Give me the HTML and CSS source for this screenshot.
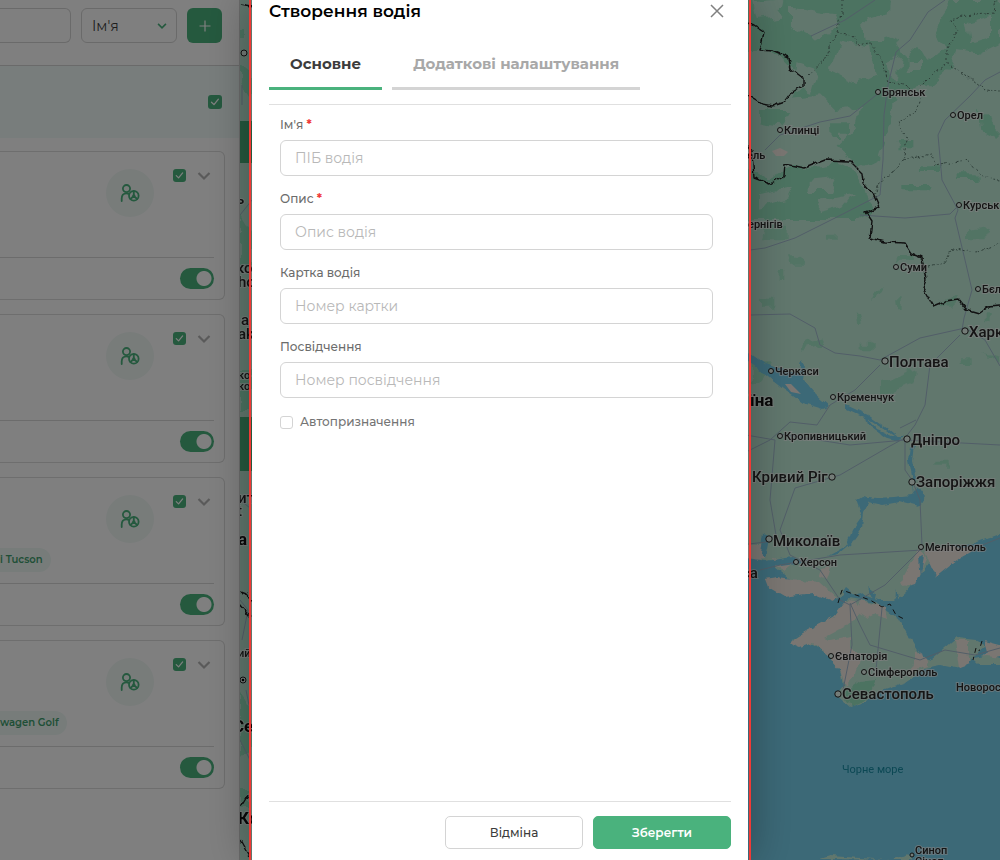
FILE: index.html
```html
<!DOCTYPE html>
<html lang="uk">
<head>
<meta charset="utf-8">
<meta name="viewport" content="width=device-width, initial-scale=1">
<title>Створення водія</title>
<link rel="stylesheet" href="styles.css">
</head>
<body>
<svg class="sprite" aria-hidden="true">
  <symbol id="check" viewBox="0 0 14 14"><path d="M3.5 7.2 6 9.6l4.4-5.4" fill="none" stroke="#fff" stroke-width="1.3" stroke-linecap="round" stroke-linejoin="round"/></symbol>
  <symbol id="chevron" viewBox="0 0 14 10"><path d="M1.5 2 7 7.5 12.500 2" fill="none" stroke="currentColor" stroke-width="2.200"/></symbol>
  <symbol id="driver" viewBox="0 0 20 18"><g fill="none" stroke="currentColor" stroke-width="1.800" stroke-linecap="round"><circle cx="6.500" cy="4.600" r="3.600"/><path d="M1.700 17v-2.500c0-3.300 2-5.200 4.800-5.200 1 0 1.700.2 2.300.6"/><circle cx="13.800" cy="11.800" r="4.800"/><path d="M13.800 7.200v3.600M13.800 12l-3.400 3M13.800 12l3.400 3"/></g><circle cx="13.800" cy="11.800" r="1.600" fill="currentColor"/></symbol>
</svg>

<div class="app">
  <aside class="sidebar">
    <div class="toolbar">
      <input class="search" type="text" aria-label="Пошук">
      <div class="sort">
        <select class="sort-select" aria-label="Сортування"><option>Ім'я</option></select>
        <svg class="sort-arrow" aria-hidden="true"><use href="#chevron"/></svg>
      </div>
      <button class="add" aria-label="Додати"><svg viewBox="0 0 12 12" aria-hidden="true"><path d="M6 .5v11M.5 6h11" stroke="#fff" stroke-width="1.200"/></svg></button>
    </div>
    <div class="band">
      <label class="tick"><input type="checkbox" checked aria-label="Обрати всіх"><svg aria-hidden="true"><use href="#check"/></svg></label>
    </div>
    <div class="cards">
      <article class="card">
        <div class="card-top">
          <span class="avatar"><svg aria-hidden="true"><use href="#driver"/></svg></span>
          <label class="tick small"><input type="checkbox" checked aria-label="Обрати водія"><svg aria-hidden="true"><use href="#check"/></svg></label>
          <button class="expand" aria-label="Розгорнути"><svg aria-hidden="true"><use href="#chevron"/></svg></button>
        </div>
        <div class="card-foot"><input class="switch" type="checkbox" checked aria-label="Активний"></div>
      </article>
      <article class="card">
        <div class="card-top">
          <span class="avatar"><svg aria-hidden="true"><use href="#driver"/></svg></span>
          <label class="tick small"><input type="checkbox" checked aria-label="Обрати водія"><svg aria-hidden="true"><use href="#check"/></svg></label>
          <button class="expand" aria-label="Розгорнути"><svg aria-hidden="true"><use href="#chevron"/></svg></button>
        </div>
        <div class="card-foot"><input class="switch" type="checkbox" checked aria-label="Активний"></div>
      </article>
      <article class="card">
        <div class="card-top">
          <span class="tag">i Tucson</span>
          <span class="avatar"><svg aria-hidden="true"><use href="#driver"/></svg></span>
          <label class="tick small"><input type="checkbox" checked aria-label="Обрати водія"><svg aria-hidden="true"><use href="#check"/></svg></label>
          <button class="expand" aria-label="Розгорнути"><svg aria-hidden="true"><use href="#chevron"/></svg></button>
        </div>
        <div class="card-foot"><input class="switch" type="checkbox" checked aria-label="Активний"></div>
      </article>
      <article class="card">
        <div class="card-top">
          <span class="tag">wagen Golf</span>
          <span class="avatar"><svg aria-hidden="true"><use href="#driver"/></svg></span>
          <label class="tick small"><input type="checkbox" checked aria-label="Обрати водія"><svg aria-hidden="true"><use href="#check"/></svg></label>
          <button class="expand" aria-label="Розгорнути"><svg aria-hidden="true"><use href="#chevron"/></svg></button>
        </div>
        <div class="card-foot"><input class="switch" type="checkbox" checked aria-label="Активний"></div>
      </article>
    </div>
  </aside>

  <main class="map">
    <svg class="map-svg" viewBox="240 0 760 860" preserveAspectRatio="xMinYMin slice" role="img" aria-label="Мапа">
      <defs>
        <filter id="rough" x="-5%" y="-5%" width="110%" height="110%"><feTurbulence type="fractalNoise" baseFrequency="0.12" numOctaves="2" seed="4"/><feDisplacementMap in="SourceGraphic" scale="6" xChannelSelector="R" yChannelSelector="G"/></filter>
        <filter id="blobs" x="-5%" y="-5%" width="110%" height="110%"><feTurbulence type="fractalNoise" baseFrequency="0.07" numOctaves="2" seed="9"/><feDisplacementMap in="SourceGraphic" scale="14" xChannelSelector="R" yChannelSelector="G"/></filter>
      </defs>
      <rect class="land" x="240" width="1200" height="1000"/>

      <g filter="url(#blobs)">
        <g class="forest" transform="scale(.33333) translate(2220 0)">
          <path d="M0-20H450L440 40 400 90 470 120 500 180 560 130 600 60 640 0H780V130L720 160 650 150 630 200 560 260 470 280 450 370 420 470 360 500 290 440 350 380 360 320 290 330 240 280 160 290 180 230 100 150 0 150Z"/>
          <path d="M0 480 80 540 150 500 220 500 300 490 340 510 370 560 400 640 360 660H0Z"/>
          <path d="M60 330 160 330 120 380 60 370Z"/><path d="M480 420h40v25h-45zM540 490h60v20h-60zM490 555h90v22h-90zM650 520h60v20h-60zM720 330l50 40v50l-40-20z"/>
          <path d="M270 370h60v25h-30v25h-28z"/>
        </g>
        <g class="land" transform="scale(.33333) translate(2220 0)">
          <path d="M40 10 130 0 120 50 50 60Z"/><path d="M150 20 280 40 290 80 220 120 150 80Z"/><path d="M370 60 430 50 430 120 380 120Z"/><path d="M530 40 600 20 580 90 610 140 560 180 520 110Z"/><path d="M440 190 480 170 470 240 450 230Z"/><path d="M500 180h40v30h-40z"/><path d="M170 190l60 20-20 70-50-20z"/><path d="M60 580 160 560 140 600 60 620Z"/><path d="M200 540 290 530 270 570 200 570Z"/><path d="M240 600 340 580 310 620 230 640Z"/><path d="M680 70l70-20v60l-60 20z"/><path d="M300 120l90 20 20 80-60 30-80-40z"/>
        </g>
        <g class="forest soft" transform="scale(.33333) translate(2220 630)">
          <path d="M70 50h70v35h-80zM150 130h20l30 40h-40zM113 180h20v30h-20zM255 65h35v18h-35zM410 235h18l-22 35h-12zM465 262h20v30h-15zM350 305h16l8 40h-14zM365 395h30v20h-30zM195 400l50-12-10 20-45 15zM420 520l110-40-10 40-60 20-40 20zM470 135h50v20h-50zM60 260h40v30h-40zM600 280l50-30v40h-30zM665 445h30v20h-30zM740 310h15v30h-15zM36 460l60 0-50 60h-10zM580 755h40v15h-40zM690 60l60-10-20 35h-40zM730 430l50 10v30z"/>
        </g>
        <path class="forest" d="M240 30h5v8h-5zM240 62l12 10v30l-12-20zM240 215l12 20v30h-12zM240 370h12v40h-12zM240 690l12 20v40l-12 5zM240 790h8v20h-8z"/>
      </g>

      <!-- sea and coast -->
      <g filter="url(#rough)">
        <path class="sea" d="M740 548 752 556 775 567 790 579 818 583 838 600 846 588 856 596 864 594 878 600 897 600 906 592 918 577 930 562 948 545 975 543 1000 534H1500V900H740Z"/>
        <path class="sand" d="M765 579 778 577 800 580 820 582 838 598 832 601 812 593 785 597 768 587ZM742 545 762 545 765 559 745 561ZM772 558l22 4-10 8-10-4zM822 569l8-2-4 12-6-2zM900 583l20-36 7 12-12 25-10 3zM925 552l24-6 30 1-18 10-25 20z"/>
        <path class="land" d="M792 640C806 630 826 622 834 616L848 598 876 602 889 612 898 618 907 634 912 642 921 657 931 660 958 637 976 639 986 645 973 657 966 665 955 668 940 665 925 668 905 682 882 690 866 702 850 707 836 695 843 686 840 670 828 656 812 644 800 646Z"/>
        <path class="sand" d="M790 643C803 630 826 622 834 616L846 600 856 601 860 614 846 626 824 638 830 640 850 636 850 648 861 654 856 674 845 686 840 670 828 656 812 643 800 647ZM860 600l26 6 2 14-12-6-8 4-12-8zM914 650l12 8 2 8-12 4-8 6 6-12zM955 640h14v24l-10 4zM985 641l15 4v12l-20 4 8-10z"/>
        <path class="forest" d="M842 694l18-13 16-2-8 20-16 8z"/>
        <path class="land" d="M965 652l8 6 14-2 13 2v6h-22zM820 859l10-3 60 4 18-6 6 6z"/>
        <path class="water" d="M896 589l5 22-6-3zM918 558l2 20 4-22zM868 588l8 6-2 8zM738 345l14 9 14 10 22 8 11 0 2-12 4 6-2 14 12 14 14 12-6 3-20-6-20-14-30-24-16-8zM846 405l22 10 20 14 16 13-12-8-20-13-26-12zM856 500l6-4 14 2 18-1 18-2 6-8 7 10-6 10-20-5-16 3-14-3-5 10-2 16-10 14-14 12-10 2 18-10 6-16 10-14zM910 444l4 0-2 16 3 14-2 20-2-18-3-16 2-14zM763 532l6 6-4 20-5-4zM866 417l12 13 14 6 12 0-6 5-14-4-16-12zM740 557l25 4 28-4 10 6-30 4-30-2z"/>
      </g>
      <path class="sand" d="M772 151l8-3 8 4-4 4h-8zM785 384l6 0 10 10-10-2z"/>

      <g class="road">
        <path d="M811 36 845 20 875 0M945 0 928 12 910 40 896 52 888 85 884 115 883 160 880 195 835 218 795 238 765 248 750 250M765 150 780 135 820 122 850 116 880 92M1000 72 985 80 970 96 945 120 938 135 942 180 958 210 955 218 965 260 972 290 964 318 962 330M860 215 905 218 950 214 958 206M750 315 790 314 815 328 820 345 835 353 860 356 880 360 920 338 965 328 985 340 1000 366M880 365 855 390 830 405 817 425 790 422 770 440 740 455M960 335 930 365 925 405 915 425 905 438 905 470 912 480 920 500 922 545 922 550 840 555 780 565 760 570M905 438 890 446 840 475 795 488 780 530 790 555 820 570 840 600 850 605 885 585 922 548M746 435 775 440 770 500 776 535 766 542 740 545M780 434 850 445 905 440 1000 445M900 428 916 420M970 550 1000 538M850 603 860 625 870 645 920 660 945 650 975 655 1000 648M882 608 876 670M850 605 852 645 843 690"/>
        <path d="M240 150 246 160M240 215 252 200M242 85v20M240 500l10 8M240 600l8 10-6 30M246 690l4 20M240 740l10 20"/>
      </g>
      <path class="dotted" d="M842 0 842 15 836 33 824 60 808 75 M836 33 852 36 858 45 870 43 882 60 888 82 908 86 920 98 916 112 898 122 907 140 903 160 893 172 880 183 874 195M903 160 932 154 935 166 965 160 985 178 1000 180M920 87 935 72 948 64 965 75 985 90 1000 91M948 64 948 48 958 30 950 20 975 14 994 12 996 0M928 266 945 262 952 248 975 253 1000 243" filter="url(#rough)"/>
      <path class="border" d="M740 20 755 26 764 32 760 50 772 51 788 58 790 68 803 78 803 86 790 94 784 102 772 106 762 104 740 90M742 140 752 152 754 178 770 184 784 176 785 164 805 168 825 160 850 161 862 173 863 183 874 196 879 207 866 212 872 221 870 238 885 242 905 243 912 254 922 258 926 280 923 288 933 306 945 301 958 299 966 309 980 313 988 307 1000 306" filter="url(#rough)"/>
      <path class="border" d="M240 5l12 2M240 592l8 3 4 8M240 605l10 12M248 795l-6 10M240 840l10 18" filter="url(#rough)"/>
      <path class="front" d="M838 603 842 590 870 600 882 607 890 604 896 615 904 619M982 641l-3 10M976 648l-3 12"/>
      <path class="front" d="M248 795 240 806"/>

      <g class="controls"><rect x="230" y="121" width="30" height="42" rx="3"/><rect x="230" y="417" width="30" height="54" rx="3"/></g>

      <g class="pins">
        <circle cx="878" cy="92" r="2.500"/><circle cx="953" cy="115" r="2.500"/><circle cx="780" cy="130" r="2.500"/><circle cx="959" cy="205" r="2.500"/><circle cx="896" cy="267" r="2.500"/><circle cx="978" cy="289" r="2.500"/><circle cx="771" cy="371" r="2.500"/><circle cx="833" cy="397" r="2.500"/><circle cx="780" cy="436" r="2.500"/><circle cx="921" cy="547" r="2.500"/><circle cx="796" cy="562" r="2.500"/><circle cx="831" cy="656" r="2.500"/><circle cx="864" cy="672" r="2.500"/><circle cx="912" cy="855" r="2"/>
        <circle cx="965" cy="331" r="3.200"/><circle cx="885" cy="361" r="3.200"/><circle cx="907" cy="439" r="3.200"/><circle cx="832" cy="477" r="3.200"/><circle cx="912" cy="482" r="3.200"/><circle cx="769" cy="539" r="3.200"/><circle cx="838" cy="694" r="3.200"/><circle cx="244" cy="53" r="3"/><circle cx="243" cy="680" r="3"/>
      </g>
      <circle cx="243" cy="680" r="1.300"/>
      <g class="city">
        <text x="882" y="96">Брянськ</text><text x="957" y="119">Орел</text><text x="784" y="134">Клинці</text><text x="747" y="159">ель</text><text x="963" y="209">Курськ</text><text x="900" y="271">Суми</text><text x="982" y="293">Бєлгород</text><text x="748" y="228">ернігів</text><text x="775" y="375">Черкаси</text><text x="837" y="401">Кременчук</text><text x="784" y="440">Кропивницький</text><text x="925" y="551">Мелітополь</text><text x="800" y="566">Херсон</text><text x="835" y="660">Євпаторія</text><text x="868" y="676">Сімферополь</text><text x="956" y="691">Новоросійськ</text><text x="915" y="854">Синоп</text><text x="915" y="865">Сіноп</text><text x="238" y="379">ко</text><text x="238" y="390">ко</text><text x="238" y="657">ий</text>
      </g>
      <g class="city large">
        <text x="969" y="337">Харків</text><text x="889" y="367">Полтава</text><text x="911" y="445">Дніпро</text><text x="752" y="482">Кривий Ріг</text><text x="916" y="487">Запоріжжя</text><text x="773" y="546">Миколаїв</text><text x="742" y="578">са</text><text x="842" y="699">Севастополь</text><text x="236" y="273">ко</text><text x="238" y="287">ho</text><text x="241" y="325">а</text><text x="238" y="339">ak</text><text x="238" y="503">ит</text><text x="237" y="516">t</text><text x="236" y="204">ь</text>
      </g>
      <g class="city country"><text x="750" y="406">їна</text><text x="238" y="545">а</text><text x="233" y="732">Се</text><text x="238" y="824">Ко</text></g>
      <text class="sea-name" x="842" y="773">Чорне море</text>
    </svg>
  </main>
</div>

<div class="overlay">
  <div class="frame">
    <form class="modal" role="dialog" aria-labelledby="dialog-title">
      <header class="modal-head">
        <h1 class="title" id="dialog-title">Створення водія</h1>
        <button class="close" type="button" aria-label="Закрити"><svg viewBox="0 0 14 14" aria-hidden="true"><path d="M1 1l12 12M13 1 1 13" stroke="#808080" stroke-width="1.500"/></svg></button>
      </header>
      <div class="tabs" role="tablist">
        <button class="tab active" type="button" role="tab" aria-selected="true">Основне</button>
        <button class="tab" type="button" role="tab" aria-selected="false">Додаткові налаштування</button>
      </div>
      <div class="fields">
        <div class="field"><label for="name">Ім'я <span class="req">*</span></label><input id="name" type="text" placeholder="ПІБ водія"></div>
        <div class="field"><label for="about">Опис <span class="req">*</span></label><input id="about" type="text" placeholder="Опис водія"></div>
        <div class="field"><label for="card">Картка водія</label><input id="card" type="text" placeholder="Номер картки"></div>
        <div class="field"><label for="licence">Посвідчення</label><input id="licence" type="text" placeholder="Номер посвідчення"></div>
        <label class="auto"><input type="checkbox">Автопризначення</label>
      </div>
      <footer class="modal-foot">
        <button class="btn" type="button">Відміна</button>
        <button class="btn primary" type="submit">Зберегти</button>
      </footer>
    </form>
  </div>
</div>
</body>
</html>
```

FILE: styles.css
```css
* { box-sizing: border-box; }

body {
  margin: 0;
  font-family: Montserrat, Inter, "Open Sans", sans-serif;
  color: #3c3c3c;
  overflow: hidden;
}

button, input, select { font: inherit; color: inherit; margin: 0; }
button { border: 0; padding: 0; background: none; cursor: pointer; }
.sprite { position: absolute; width: 0; height: 0; }

.app { display: flex; height: 100vh; }

/* sidebar */
.sidebar {
  flex: 0 0 240px;
  background: #fff;
  border-right: 1px solid #d4d4d4;
  overflow: hidden;
}

.toolbar {
  display: flex;
  align-items: center;
  gap: 10px;
  padding: 8px 17px 22px 0;
  border-bottom: 1px solid #d4d4d4;
}

.search {
  flex: 1;
  min-width: 0;
  height: 35px;
  border: 1px solid #d4d4d4;
  border-left: 0;
  border-radius: 0 6px 6px 0;
}

.sort { position: relative; flex: 0 0 96px; }

.sort-select {
  appearance: none;
  width: 100%;
  height: 35px;
  padding: 0 10px;
  border: 1px solid #d4d4d4;
  border-radius: 6px;
  background: #fff;
  font-size: 14px;
}

.sort-arrow {
  position: absolute;
  right: 10px;
  top: 14px;
  width: 10px;
  height: 8px;
  color: #4ab27d;
  pointer-events: none;
}

.add {
  display: grid;
  place-items: center;
  width: 35px;
  height: 35px;
  border-radius: 6px;
  background: #4ab27d;
}
.add svg { width: 12px; height: 12px; }

.band {
  display: flex;
  align-items: center;
  justify-content: flex-end;
  height: 72px;
  padding-right: 17px;
  background: #f0faf8;
}

.tick { display: grid; width: 14px; height: 14px; }
.tick > * { grid-area: 1 / 1; width: 100%; height: 100%; }
.tick input { appearance: none; border-radius: 3px; background: #4ab27d; }
.tick svg { pointer-events: none; }
.tick.small { width: 13px; height: 13px; }

.cards {
  display: flex;
  flex-direction: column;
  gap: 14px;
  padding: 13px 14px 0 0;
}

.card {
  border: 1px solid #dcdcdc;
  border-left: 0;
  border-radius: 0 6px 6px 0;
  padding-right: 10px;
}

.card-top {
  display: flex;
  align-items: flex-start;
  justify-content: flex-end;
  height: 105px;
  padding: 17px 3px 0 0;
}

.tag {
  align-self: flex-end;
  margin-right: auto;
  margin-bottom: 11px;
  padding: 0 8px 0 0;
  border-radius: 0 12px 12px 0;
  background: #eef8f5;
  color: #3f9f6d;
  font-size: 10px;
  font-weight: 600;
  line-height: 24px;
  white-space: nowrap;
}

.avatar {
  display: grid;
  place-items: center;
  width: 48px;
  height: 48px;
  margin-right: 19px;
  border-radius: 50%;
  background: #f0f8f5;
  color: #4ab27d;
}
.avatar svg { width: 20px; height: 18px; }

.expand { width: 14px; height: 14px; margin-left: 11px; color: #b4b4b4; }
.expand svg { display: block; width: 14px; height: 14px; }

.card-foot {
  display: flex;
  justify-content: flex-end;
  height: 42px;
  padding-top: 10px;
  border-top: 1px solid #d8d8d8;
}

.switch {
  appearance: none;
  width: 34px;
  height: 21px;
  border-radius: 11px;
  background: radial-gradient(circle at 24px 50%, #fff 7px, #4ab27d 8px);
}

/* map */
.map { flex: 1; min-width: 0; overflow: hidden; }
.map-svg { display: block; width: 100%; height: 100%; }
.land { fill: #c2eedb; }
.forest { fill: #98e6c2; }
.soft { opacity: .7; }
.sea, .water { fill: #78d2ee; }
.sand { fill: #f4ece4; }
.road { fill: none; stroke: #a4bcd0; stroke-width: 1; stroke-linejoin: round; }
.dotted { fill: none; stroke: #5c7c70; stroke-width: 1; stroke-dasharray: 2 2; }
.border { fill: none; stroke: #222; stroke-width: 1.4; stroke-linejoin: round; }
.front { fill: none; stroke: #222; stroke-width: 1; stroke-dasharray: 5 4; }
.controls { fill: #4ab27d; }
.pins { fill: #e8f8f0; stroke: #222; stroke-width: 1; }

.city {
  font: 500 11px Roboto, sans-serif;
  fill: #2a2a2a;
  stroke: #fff;
  stroke-opacity: .6;
  stroke-width: 2;
  paint-order: stroke;
}
.city.large { font-size: 15px; }
.city.country { font-size: 17px; font-weight: 700; fill: #111; }
.sea-name { font: 400 11px Roboto, sans-serif; fill: #1890a8; }

/* dialog */
.overlay {
  position: fixed;
  inset: 0;
  display: flex;
  justify-content: center;
  background: rgba(0, 0, 0, .5);
}

.frame {
  display: flex;
  width: 100%;
  max-width: 502px;
  padding: 0 1px;
  border: solid #f03a36;
  border-width: 0 2px;
  box-shadow: 0 0 40px rgba(0, 0, 0, .3);
}

.modal {
  flex: 1;
  min-width: 0;
  display: flex;
  flex-direction: column;
  padding: 0 17px 11px;
  background: #fff;
}

.modal-head {
  display: flex;
  align-items: center;
  justify-content: space-between;
  height: 22px;
  padding-right: 7px;
}
.title { margin: 0; font-size: 17px; line-height: 22px; font-weight: 600; color: #000; }
.close { width: 14px; height: 14px; }
.close svg { display: block; }

.tabs {
  display: flex;
  gap: 10px;
  margin-top: 16px;
  padding-bottom: 14px;
  border-bottom: 1px solid #e0e0e0;
}

.tab {
  height: 52px;
  padding: 2px 21px 0;
  border-bottom: 3px solid #d4d4d4;
  font-size: 15px;
  font-weight: 700;
  color: #a8a8a8;
}
.tab.active { border-color: #4ab27d; color: #3c3c3c; }

.fields {
  flex: 1;
  display: flex;
  flex-direction: column;
  gap: 14px;
  padding: 11px 18px 0 11px;
}

.field { display: flex; flex-direction: column; gap: 6px; }
.field label { font-size: 12px; line-height: 18px; font-weight: 500; color: #6c6c6c; }
.req { color: #f03a3a; font-weight: 700; }

.field input {
  width: 100%;
  height: 36px;
  padding: 0 14px;
  border: 1px solid #d4d4d4;
  border-radius: 6px;
  background: #fff;
  font-size: 14px;
}
.field input::placeholder { color: #b8b8b8; opacity: 1; }

.auto {
  display: flex;
  align-items: center;
  gap: 7px;
  font-size: 12px;
  line-height: 20px;
  font-weight: 500;
  color: #747474;
}
.auto input {
  appearance: none;
  width: 13px;
  height: 13px;
  border: 1px solid #d4d4d4;
  border-radius: 3px;
}

.modal-foot {
  display: flex;
  justify-content: flex-end;
  gap: 10px;
  padding-top: 14px;
  border-top: 1px solid #e0e0e0;
}

.btn {
  width: 138px;
  height: 33px;
  border: 1px solid #d4d4d4;
  border-radius: 5px;
  font-size: 12px;
  font-weight: 500;
}
.btn.primary { border-color: #4ab27d; background: #4ab27d; color: #fff; font-weight: 600; }
```
